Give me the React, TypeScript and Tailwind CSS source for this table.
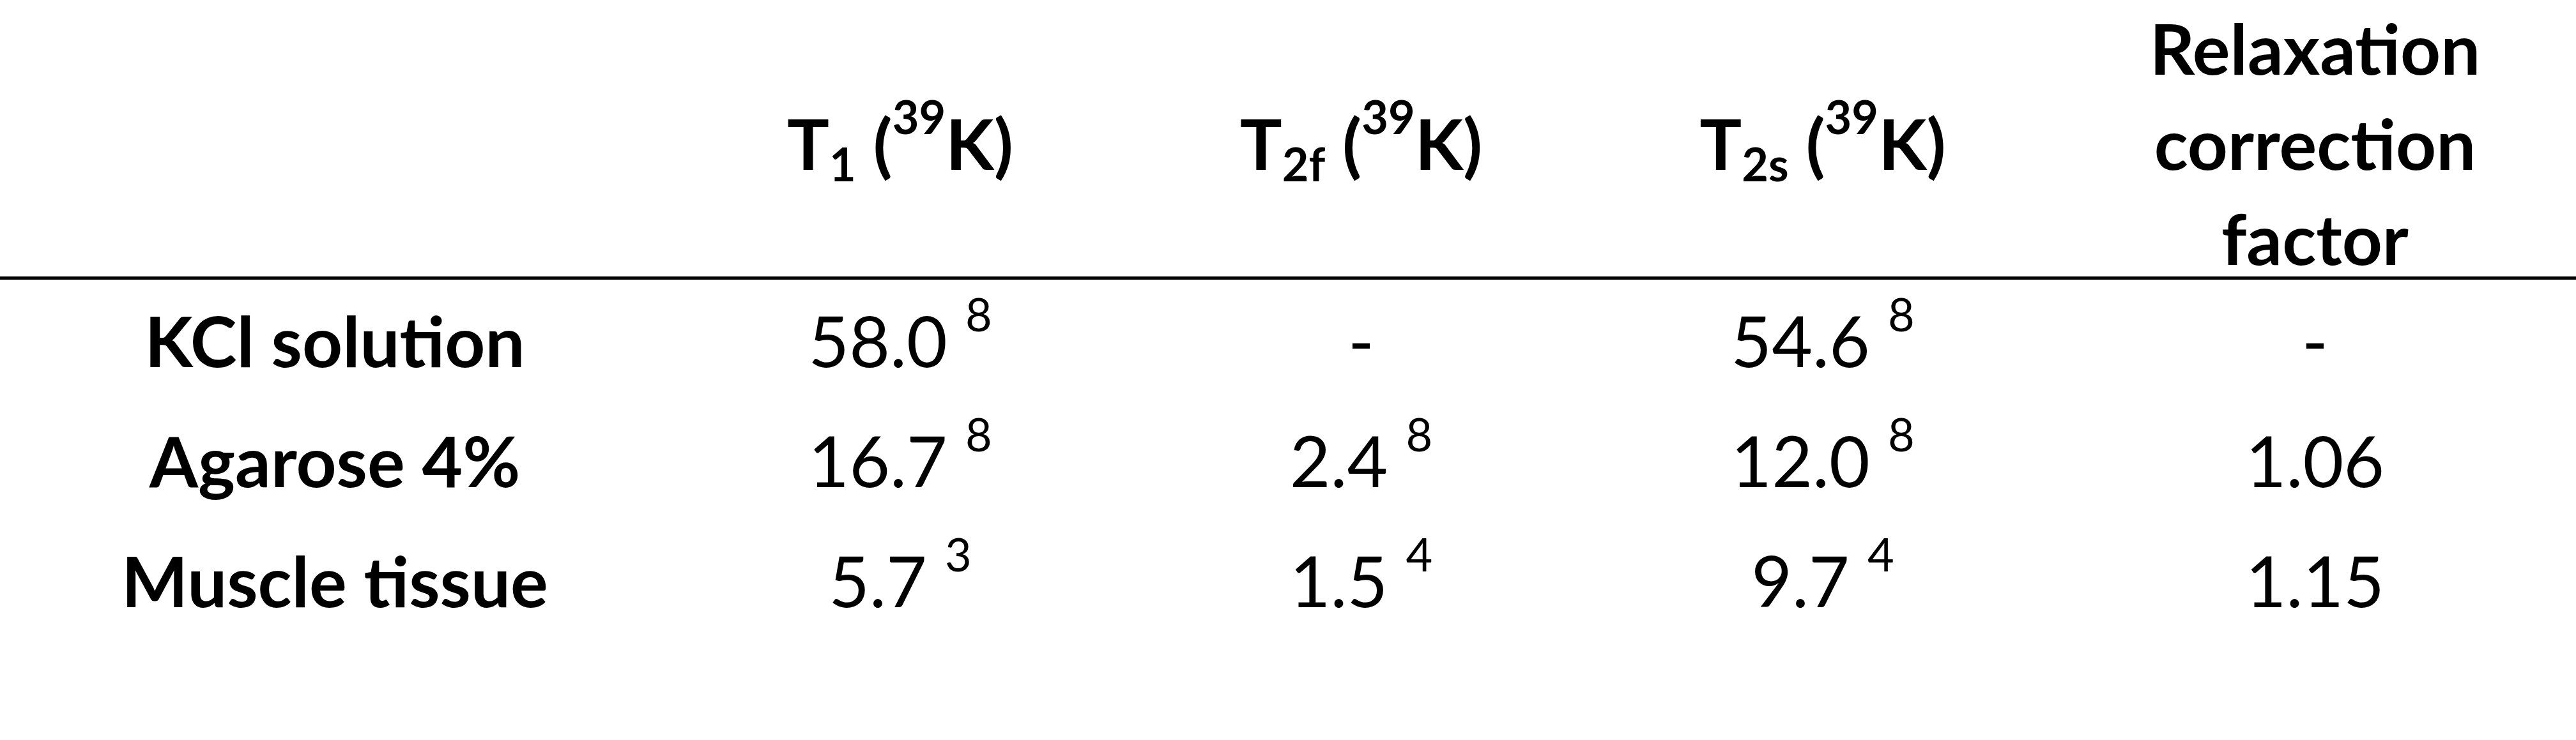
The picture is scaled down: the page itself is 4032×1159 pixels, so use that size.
import React from "react";

type Cell = string | [string, string];

const grid = "grid grid-cols-[1048px_722px_721px_724px_817px]";

const Sup = ({ children }: { children: React.ReactNode }) => (
  <span className="text-[72px] leading-[0] align-[56px]">{children}</span>
);

const Sub = ({ children }: { children: React.ReactNode }) => (
  <span className="text-[72px] leading-[0] align-[-18px]">{children}</span>
);

const rows: Cell[][] = [
  ["KCl solution", ["58.0", "8"], "-", ["54.6", "8"], "-"],
  ["Agarose 4%", ["16.7", "8"], ["2.4", "8"], ["12.0", "8"], "1.06"],
  ["Muscle tissue", ["5.7", "3"], ["1.5", "4"], ["9.7", "4"], "1.15"],
];

const Value = ({ cell }: { cell: Cell }) => {
  if (typeof cell === "string") return <span>{cell}</span>;
  return (
    <span className="whitespace-nowrap">
      {cell[0]} <Sup>{cell[1]}</Sup>
    </span>
  );
};

const Relaxation = ({ sub }: { sub: string }) => (
  <span className="whitespace-nowrap">
    T<Sub>{sub}</Sub> (<Sup>39</Sup>K)
  </span>
);

export default function App() {
  return (
    <div className="w-[4032px] h-[1159px] overflow-hidden bg-white text-black font-['Lato','Noto_Sans',sans-serif] text-[110px]">
      {/* header */}
      <div className={`${grid} h-[438px] box-border border-b-[5px] border-black pb-[21px] font-bold leading-[149px]`}>
        <div />
        <div className="flex flex-col items-center justify-center text-center">
          <Relaxation sub="1" />
        </div>
        <div className="flex flex-col items-center justify-center text-center">
          <Relaxation sub="2f" />
        </div>
        <div className="flex flex-col items-center justify-center text-center">
          <Relaxation sub="2s" />
        </div>
        <div className="flex flex-col items-center justify-center text-center">
          <span>Relaxation</span>
          <span>correction</span>
          <span>factor</span>
        </div>
      </div>

      {/* body */}
      {rows.map((row, i) => (
        <div key={i} className={`${grid} h-[188px] leading-[147px]`}>
          {row.map((cell, j) => (
            <div
              key={j}
              className={`flex items-center justify-center text-center ${j === 0 ? "font-bold" : ""}`}
            >
              <Value cell={cell} />
            </div>
          ))}
        </div>
      ))}
    </div>
  );
}
